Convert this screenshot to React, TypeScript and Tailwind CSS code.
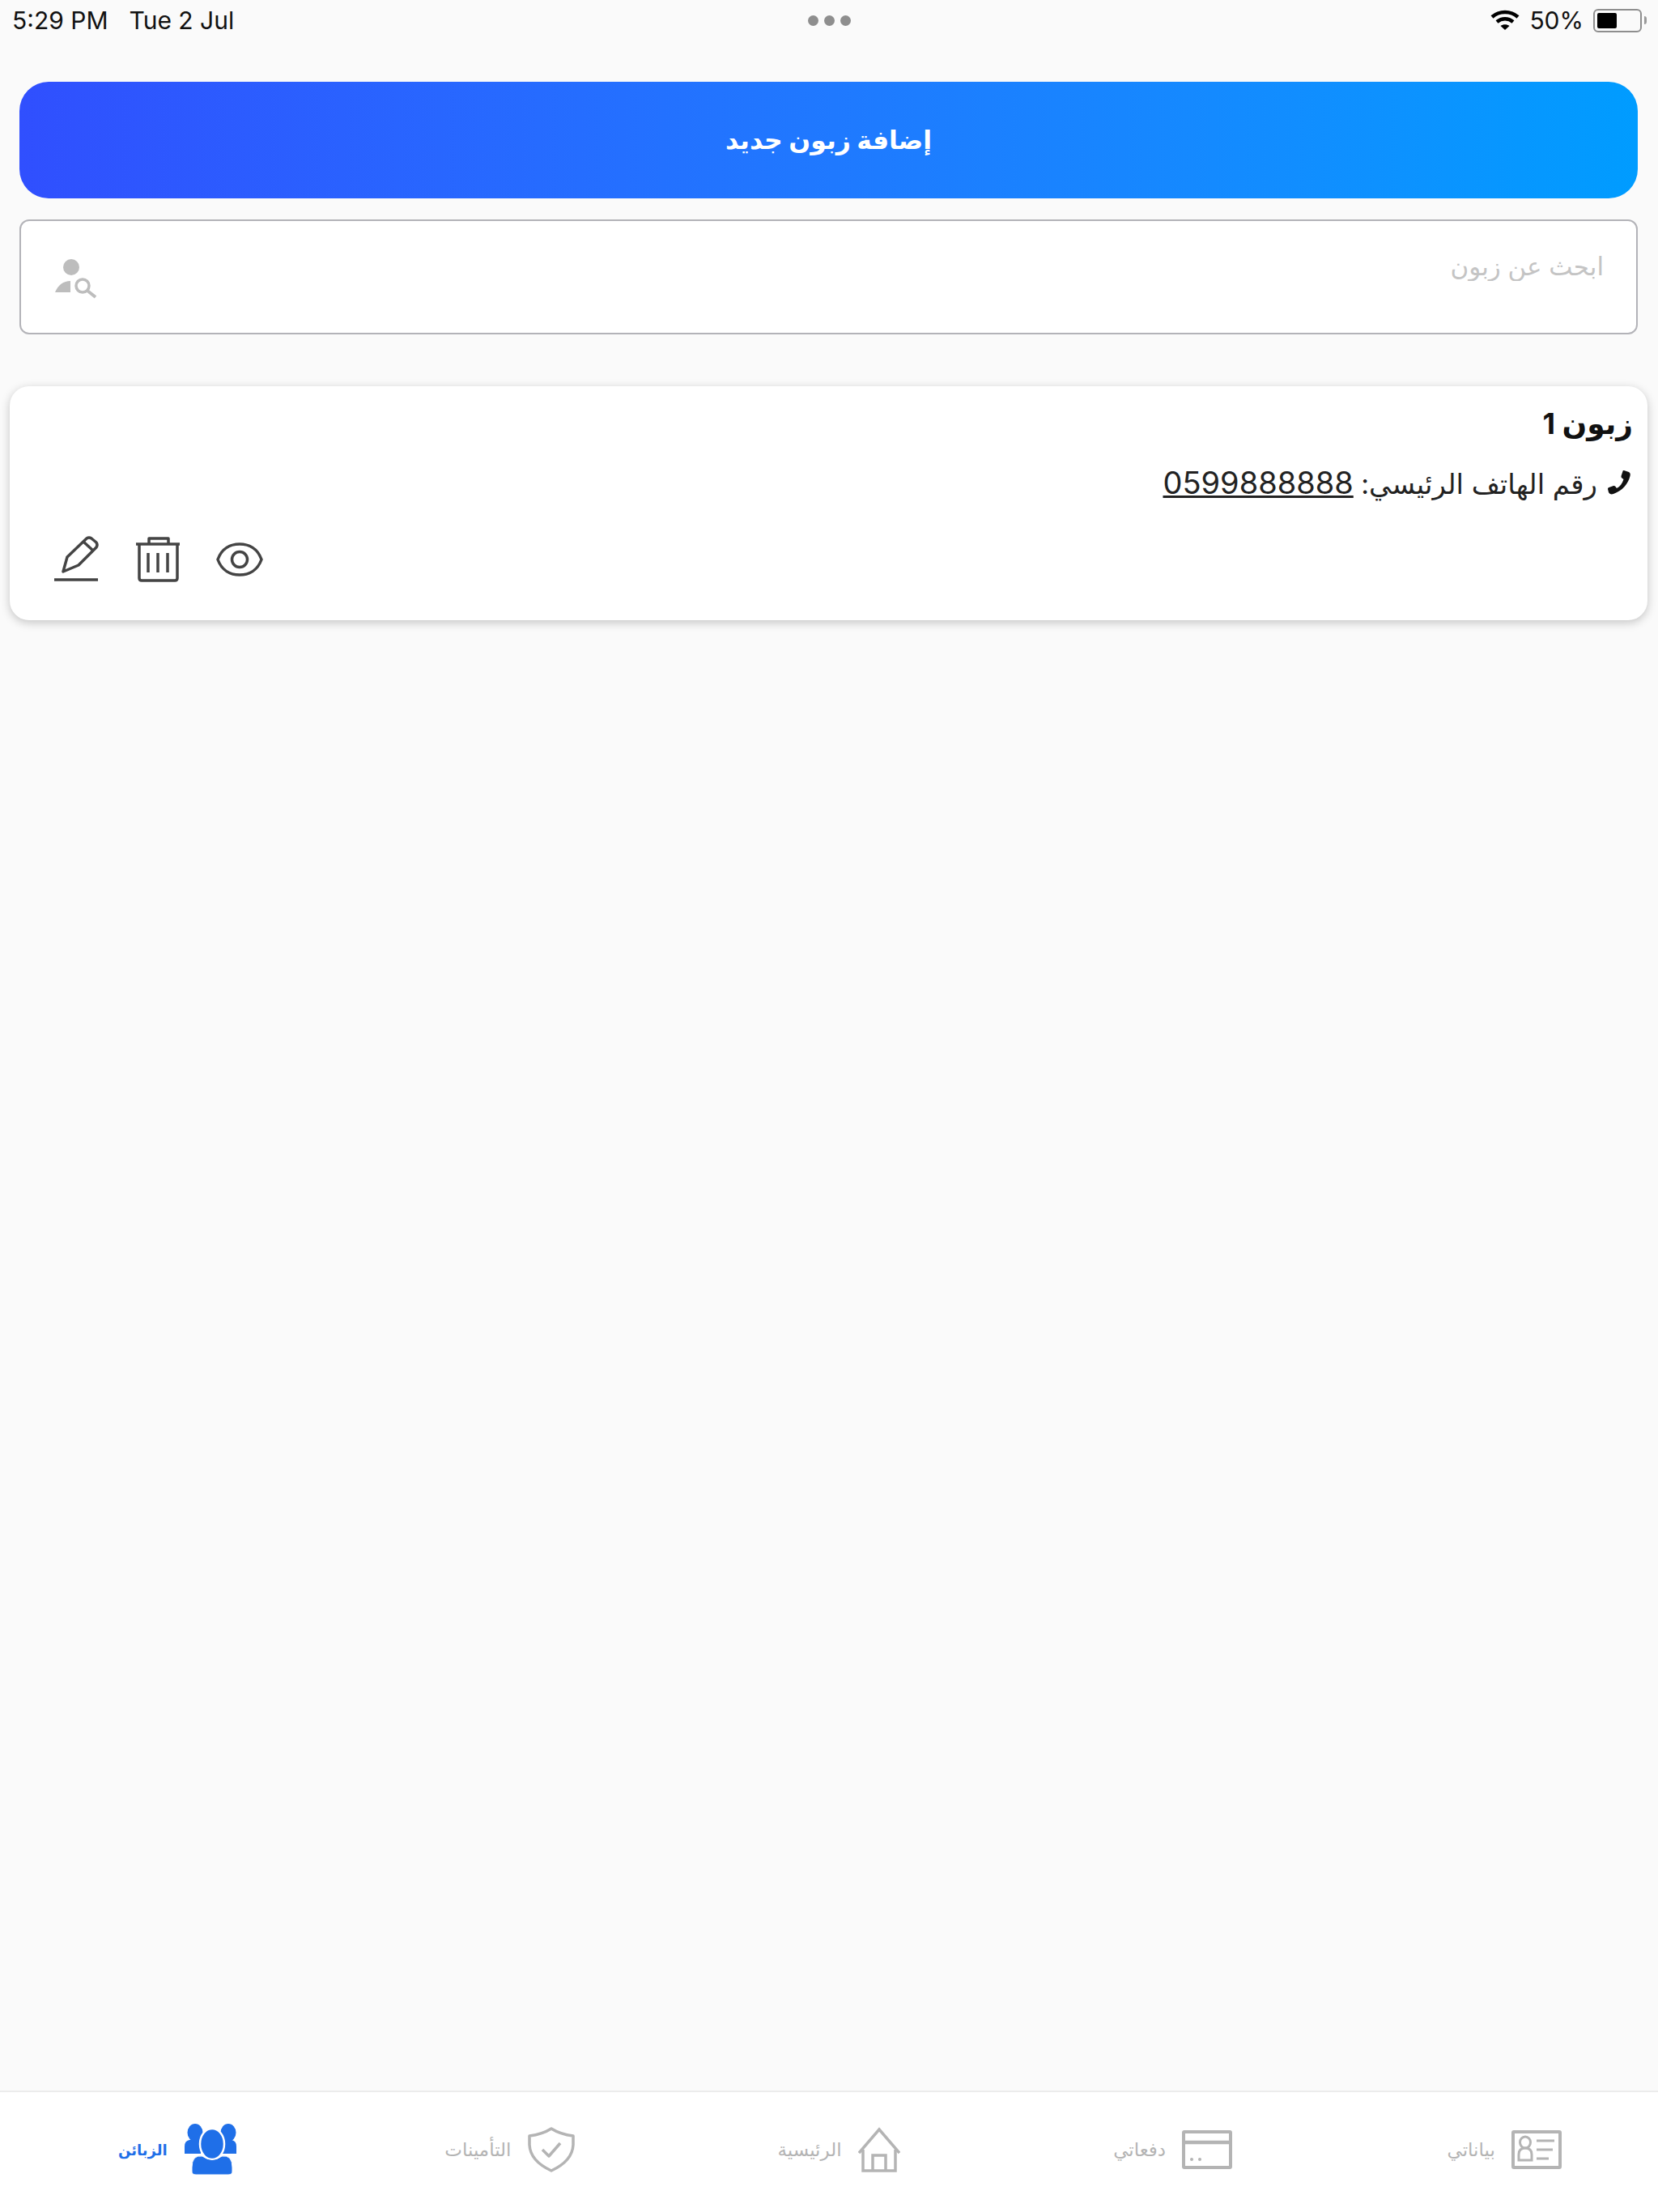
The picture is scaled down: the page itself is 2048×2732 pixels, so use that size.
const arabic = "font-['Inter','DejaVu_Sans',sans-serif]";

function WifiIcon() {
  return (
    <svg width="36" height="26" viewBox="0 0 36 26" fill="none" stroke="#000" strokeWidth="4.500">
      <path d="M2 9 C11 1 25 1 34 9" />
      <path d="M8 15 C14 10 22 10 28 15" />
      <path d="M18 25 L12.500 20 C15.500 17.500 20.500 17.500 23.500 20 Z" fill="#000" stroke="none" />
    </svg>
  );
}

function BatteryIcon() {
  return (
    <div className="flex items-center gap-[3px]">
      <div className="w-[60px] h-[29px] rounded-[6px] border-2 border-[#8e8e8e] p-[3px]">
        <div className="w-[24px] h-full rounded-[2px] bg-black" />
      </div>
      <div className="w-[3px] h-[10px] rounded-r-full bg-[#9a9a9a]" />
    </div>
  );
}

function PersonSearchIcon() {
  return (
    <svg width="56" height="56" viewBox="0 0 56 56" fill="none" className="mt-[4px]">
      <circle cx="24" cy="14" r="10" fill="#bdbdbd" />
      <path d="M4 45 L23 45 L23 31 Q10 31 4 45 Z" fill="#bdbdbd" />
      <circle cx="38" cy="37" r="8" stroke="#bdbdbd" strokeWidth="3.500" />
      <path d="M44 43 L54 51" stroke="#bdbdbd" strokeWidth="4" />
    </svg>
  );
}

function PhoneIcon() {
  return (
    <svg width="30" height="32" viewBox="0 0 30 32" fill="#111">
      <path d="M21 1 L27 3 C29 4 29 6 28.500 8 C26 18 19 26 8 30 C5 31 3 30 2 28 L1 24 C1 23 1.500 22 2.500 22 L8 20 C9 20 10 20 10.500 21 L12 23 C16 21 19 17 20.500 12 L18.500 10.500 C17.500 10 17.500 9 17.500 8 L19.500 2 C19.500 1 20 1 21 1 Z" />
    </svg>
  );
}

function PenIcon() {
  return (
    <svg width="60" height="60" viewBox="0 0 60 60" fill="none" stroke="#444" strokeWidth="3.500" strokeLinejoin="round">
      <path d="M14 46 L19 28 L43 5 Q46 3 49 5 L55 10 Q57 13 55 16 L33 38 Z" />
      <path d="M39 9 L51 20" />
      <path d="M3 56 L57 56" strokeWidth="3.500" />
    </svg>
  );
}

function TrashIcon() {
  return (
    <svg width="60" height="60" viewBox="0 0 60 60" fill="none" stroke="#444" strokeWidth="3.500" strokeLinejoin="round">
      <path d="M3 12 L57 12" />
      <path d="M19 12 L19 5 L43 5 L43 12" />
      <path d="M7 12 L7 54 Q7 57 10 57 L51 57 Q54 57 54 54 L54 12" />
      <path d="M18 23 L18 47 M30 23 L30 47 M42 23 L42 47" />
    </svg>
  );
}

function EyeIcon() {
  return (
    <svg width="60" height="60" viewBox="0 0 60 60" fill="none" stroke="#444" strokeWidth="3.500">
      <path d="M3 31 C8 17 19 12 30 12 C41 12 52 17 57 31 C52 45 41 50 30 50 C19 50 8 45 3 31 Z" />
      <circle cx="30" cy="31" r="9.500" />
    </svg>
  );
}

function PeopleIcon() {
  return (
    <svg width="68" height="64" viewBox="0 0 68 64" fill="#1f6fe8">
      <ellipse cx="15" cy="11" rx="9.500" ry="11" />
      <ellipse cx="56" cy="11" rx="9.500" ry="11" />
      <path d="M2 37 L2 28 Q2 21 8 20 L22 20 L22 37 Z" />
      <path d="M66 37 L66 28 Q66 21 60 20 L46 20 L46 37 Z" />
      <ellipse cx="36" cy="25" rx="15" ry="19" stroke="#fff" strokeWidth="2.500" />
      <path d="M11 59 L11 54 Q11 38 24 40 Q36 49 48 40 Q61 38 61 54 L61 59 Q61 63 56 63 L16 63 Q11 63 11 59 Z" stroke="#fff" strokeWidth="1" />
    </svg>
  );
}

function ShieldIcon() {
  return (
    <svg width="58" height="56" viewBox="0 0 58 56" fill="none" stroke="#b4b4b4" strokeWidth="3.500" strokeLinejoin="round">
      <path d="M29 2 Q40 9 56 11 L56 22 Q55 42 29 54 Q3 42 2 22 L2 11 Q18 9 29 2 Z" />
      <path d="M18 28 L26 36 L40 20" />
    </svg>
  );
}

function HomeIcon() {
  return (
    <svg width="52" height="56" viewBox="0 0 52 56" fill="none" stroke="#b4b4b4" strokeWidth="3.500">
      <path d="M1 32 L26 3 L51 32" />
      <path d="M6 28 L6 54 L46 54 L46 28" />
      <path d="M18 54 L18 35 L34 35 L34 54" />
    </svg>
  );
}

function CardIcon() {
  return (
    <svg width="62" height="48" viewBox="0 0 62 48" fill="none" stroke="#b4b4b4" strokeWidth="4">
      <rect x="2" y="2" width="58" height="44" rx="1" />
      <path d="M2 15 L60 15" strokeWidth="4.500" />
      <circle cx="12" cy="36" r="2" fill="#b4b4b4" stroke="none" />
      <circle cx="22" cy="36" r="2" fill="#b4b4b4" stroke="none" />
    </svg>
  );
}

function IdCardIcon() {
  return (
    <svg width="62" height="48" viewBox="0 0 62 48" fill="none" stroke="#b4b4b4" strokeWidth="4">
      <rect x="2" y="2" width="58" height="44" rx="1" />
      <ellipse cx="17" cy="15" rx="6.500" ry="7" strokeWidth="3" />
      <path d="M9 37 L9 30 Q9 22 17 22 Q25 22 25 30 L25 37 Z" strokeWidth="3" />
      <path d="M31 13 L53 13 M31 24 L51 24 M31 35 L46 35" strokeWidth="3" />
    </svg>
  );
}

const tabs = [
  { label: "الزبائن", icon: <PeopleIcon />, box: "gap-[19px] pl-[30px]", text: "text-[18px] font-bold text-[#1f6fe8]" },
  { label: "التأمينات", icon: <ShieldIcon />, box: "gap-[20px] pl-[30px]", text: "text-[23px] text-[#b4b4b4]" },
  { label: "الرئيسية", icon: <HomeIcon />, box: "gap-[20px] pl-[24px]", text: "text-[23px] text-[#b4b4b4]" },
  { label: "دفعاتي", icon: <CardIcon />, box: "gap-[20px] pl-[30px]", text: "text-[23px] text-[#b4b4b4]" },
  { label: "بياناتي", icon: <IdCardIcon />, box: "gap-[20px] pl-[30px]", text: "text-[23px] text-[#b4b4b4]" },
];

export default function App() {
  return (
    <div className={`flex flex-col w-[2048px] h-[2732px] bg-[#fafafa] ${arabic}`}>
      {/* status bar */}
      <div className="flex items-center justify-between h-[50px] pl-[15px] pr-[14px] text-[30px] text-[#111]">
        <div className="flex gap-[26px] w-[400px]">
          <span>5:29 PM</span>
          <span>Tue 2 Jul</span>
        </div>
        <div className="flex gap-[7px]">
          <div className="w-[13px] h-[13px] rounded-full bg-[#8e8e8e]" />
          <div className="w-[13px] h-[13px] rounded-full bg-[#8e8e8e]" />
          <div className="w-[13px] h-[13px] rounded-full bg-[#8e8e8e]" />
        </div>
        <div className="flex items-center justify-end gap-[12px] w-[400px]">
          <WifiIcon />
          <span>50%</span>
          <BatteryIcon />
        </div>
      </div>

      <div className="flex flex-col flex-1 pl-[24px] pr-[25px]">
        <button className="mt-[51px] h-[144px] rounded-[36px] bg-gradient-to-r from-[#304ffe] to-[#009cff] text-white font-bold text-[31.5px]">
          إضافة زبون جديد
        </button>

        <div className="flex items-center mt-[26px] h-[142px] pl-[38px] pr-[40px] rounded-[12px] border-2 border-[#b3b3b8] bg-white">
          <PersonSearchIcon />
          <input
            dir="rtl"
            placeholder="ابحث عن زبون"
            className="flex-1 mb-[26px] text-[31px] outline-none placeholder:text-[#c4c4c4]"
          />
        </div>

        {/* customer card */}
        <div className="-ml-[12px] -mr-[12px] mt-[64px] h-[289px] rounded-[24px] bg-white shadow-[0_3px_12px_rgba(0,0,0,0.22)]">
          <div dir="rtl" className="pt-[23px] pr-[18px]">
            <div className="h-[46px] text-[36px] font-bold leading-[46px] text-[#111]">زبون 1</div>
            <div className="flex items-center gap-[12px] mt-[25px] h-[50px] pr-[2px] text-[34px] text-[#222]">
              <PhoneIcon />
              <span>
                رقم الهاتف الرئيسي: <span className="underline text-[38px]">0599888888</span>
              </span>
            </div>
          </div>
          <div className="flex gap-[41px] mt-[39px] pl-[52px]">
            <PenIcon />
            <TrashIcon />
            <EyeIcon />
          </div>
        </div>
      </div>

      {/* bottom tabs */}
      <div className="grid grid-cols-5 h-[150px] border-t-2 border-[#ececec] bg-white">
        {tabs.map((tab) => (
          <div key={tab.label} className={`flex items-center justify-center pb-[6px] ${tab.box}`}>
            <span className={tab.text}>{tab.label}</span>
            {tab.icon}
          </div>
        ))}
      </div>
    </div>
  );
}
